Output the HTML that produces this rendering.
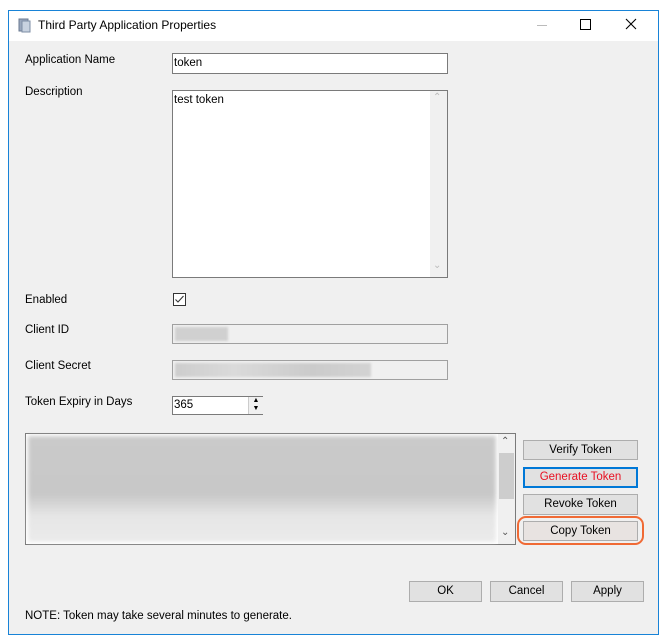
<!DOCTYPE html><html><head><style>
body{margin:0;width:667px;height:642px;background:#fff;position:relative;font-family:"Liberation Sans",sans-serif;font-size:11.5px;color:#000;overflow:hidden}
.a{position:absolute}
.win{left:8px;top:10px;width:649px;height:623px;border:1px solid #1883d7;background:#f0f0f0}
.tb{left:9px;top:11px;width:649px;height:30px;background:#fff}
.inp{background:#fff;border:1px solid #7a7a7a;box-sizing:border-box}
.dis{background:#f0f0f0;border:1px solid #a0a0a0;box-sizing:border-box}
.btn{background:#e1e1e1;border:1px solid #adadad;box-sizing:border-box;text-align:center;line-height:18px}
</style></head><body>
<div class="a win"></div>
<div class="a tb"></div>
<svg class="a" style="left:17px;top:18px" width="15" height="15"><rect x="2" y="1" width="9" height="12" fill="#9aa8bd" stroke="#6a7a92"/><rect x="5" y="3" width="8" height="11" fill="#c8d2e0" stroke="#7d8da5"/></svg>
<div class="a" style="left:38px;top:18px;font-size:12px">Third Party Application Properties</div>
<div class="a" style="left:537px;top:25px;width:10px;height:1px;background:#bbb"></div>
<div class="a" style="left:580px;top:19px;width:9px;height:9px;border:1px solid #000"></div>
<svg class="a" style="left:625px;top:18px" width="12" height="12"><path d="M1 1L11 11M11 1L1 11" stroke="#000" stroke-width="1.1"/></svg>

<div class="a" style="left:25px;top:54px">Application Name</div>
<div class="a inp" style="left:172px;top:53px;width:276px;height:21px;padding:3px 1px">token</div>
<div class="a" style="left:25px;top:86px">Description</div>
<div class="a inp" style="left:172px;top:90px;width:276px;height:188px;padding:3px 1px">test token</div>
<div class="a" style="left:430px;top:91px;width:17px;height:186px;background:#f0f0f0"></div>
<div class="a" style="left:433px;top:92px;font-size:10px;color:#bbb">&#8963;</div>
<div class="a" style="left:433px;top:260px;font-size:10px;color:#bbb">&#8964;</div>

<div class="a" style="left:25px;top:294px">Enabled</div>
<div class="a" style="left:173px;top:293px;width:11px;height:11px;border:1px solid #333;background:#fff"></div>
<svg class="a" style="left:173px;top:293px" width="13" height="13"><path d="M2.5 6.5L5 9L10.5 3" stroke="#333" fill="none" stroke-width="1.1"/></svg>

<div class="a" style="left:25px;top:324px">Client ID</div>
<div class="a dis" style="left:172px;top:324px;width:276px;height:20px"></div>
<div class="a" style="left:175px;top:327px;width:53px;height:14px;background:#d0d0d0;filter:blur(1px)"></div>
<div class="a" style="left:25px;top:360px">Client Secret</div>
<div class="a dis" style="left:172px;top:360px;width:276px;height:20px"></div>
<div class="a" style="left:175px;top:363px;width:196px;height:14px;background:linear-gradient(90deg,#cdcdcd,#dadada 30%,#cbcbcb 70%,#d3d3d3);filter:blur(1px)"></div>
<div class="a" style="left:25px;top:396px">Token Expiry in Days</div>
<div class="a inp" style="left:172px;top:396px;width:91px;height:19px;padding:2px 1px">365</div>
<div class="a" style="left:248px;top:397px;width:14px;height:17px;background:#f0f0f0;border-left:1px solid #ccc;font-size:7px;line-height:8px;text-align:center">&#9650;<br>&#9660;</div>

<div class="a" style="left:25px;top:433px;width:491px;height:112px;border:1px solid #7a7a7a;background:#fff;box-sizing:border-box"></div>
<div class="a" style="left:28px;top:436px;width:468px;height:106px;background:linear-gradient(180deg,#cacaca 0%,#c8c8c8 55%,#e6e6e6 75%,#ebebeb 100%);filter:blur(2px)"></div>
<div class="a" style="left:498px;top:434px;width:17px;height:110px;background:#f0f0f0"></div>
<div class="a" style="left:499px;top:453px;width:15px;height:46px;background:#cdcdcd"></div>
<div class="a" style="left:501px;top:436px;font-size:10px;color:#555">&#8963;</div>
<div class="a" style="left:501px;top:527px;font-size:10px;color:#555">&#8964;</div>

<div class="a btn" style="left:523px;top:440px;width:115px;height:20px">Verify Token</div>
<div class="a btn" style="left:523px;top:467px;width:115px;height:21px;border:2px solid #0078d7;line-height:17px;color:#e81123">Generate Token</div>
<div class="a btn" style="left:523px;top:494px;width:115px;height:21px">Revoke Token</div>
<div class="a" style="left:517px;top:516px;width:127px;height:29px;border:2px solid #f06a35;border-radius:9px;box-sizing:border-box"></div>
<div class="a btn" style="left:523px;top:521px;width:115px;height:20px;background:#e8e3e1">Copy Token</div>

<div class="a btn" style="left:409px;top:581px;width:73px;height:21px">OK</div>
<div class="a btn" style="left:490px;top:581px;width:73px;height:21px">Cancel</div>
<div class="a btn" style="left:571px;top:581px;width:73px;height:21px">Apply</div>
<div class="a" style="left:25px;top:610px">NOTE: Token may take several minutes to generate.</div>
</body></html>
